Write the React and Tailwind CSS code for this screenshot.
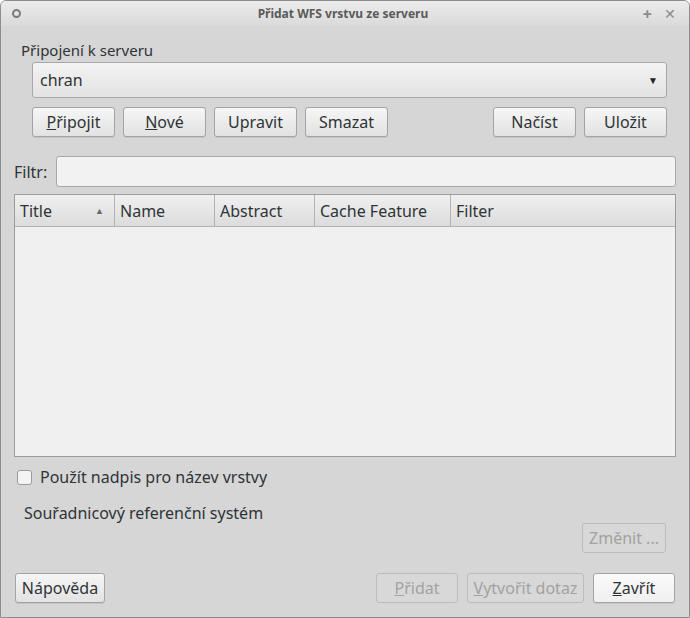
import React from "react";

const btn =
  "h-[30px] rounded-[3px] border border-[#a3a3a3] bg-gradient-to-b from-[#f6f6f6] to-[#e2e2e2] shadow-[0_1px_0_rgba(0,0,0,0.08)] text-[#2e3436] flex items-center justify-center";
const btnOff =
  "h-[30px] rounded-[3px] border border-[#bcbcbc] bg-[#d8d8d8] text-[#a2a2a2] flex items-center justify-center";

function Header({ label, w, sort, last }) {
  return (
    <div
      className={`h-full flex items-center px-[5px] ${last ? "flex-1" : "border-r border-[#b2b2b2]"} ${w}`}
    >
      <span className="flex-1">{label}</span>
      {sort && <span className="text-[9px] text-[#6a6a6a] mr-[5px]">▲</span>}
    </div>
  );
}

export default function App() {
  return (
    <div
      className="w-[690px] h-[618px] bg-[#d6d6d6] text-[16px] text-[#2e3436] flex flex-col border border-[#8e8e8e] rounded-t-[6px] overflow-hidden"
      style={{ fontFamily: '"Noto Sans", "Open Sans", sans-serif' }}
    >
      {/* title bar */}
      <div className="h-[25px] shrink-0 flex items-center px-[11px] bg-gradient-to-b from-[#ececec] to-[#dadada]">
        <div className="w-[9px] h-[9px] rounded-full border-2 border-[#7b7b7b]" />
        <div className="flex-1 text-center text-[12px] font-bold text-[#5a5a5a] pl-[22px]">
          Přidat WFS vrstvu ze serveru
        </div>
        <span className="text-[16px] text-[#8a8a8a] leading-none font-bold mr-[12px]">+</span>
        <span className="text-[14px] text-[#8a8a8a] leading-none mr-[2px]">✕</span>
      </div>

      <div className="flex-1 flex flex-col px-[13px]">
        <div className="pl-[7px] mt-[13px] leading-[22px] text-[15px]">Připojení k serveru</div>

        <div className="ml-[18px] mr-[9px] mt-[1px] h-[36px] rounded-[3px] border border-[#a8a8a8] bg-gradient-to-b from-[#f3f3f3] to-[#e3e3e3] flex items-center px-[7px]">
          <span className="flex-1">chran</span>
          <span className="text-[10px] text-[#222] mr-[1px]">▼</span>
        </div>

        <div className="ml-[18px] mr-[9px] mt-[9px] flex gap-[8px]">
          <div className={`${btn} w-[83px] border-[#9fb59a]`}>
            <span><u>P</u>řipojit</span>
          </div>
          <div className={`${btn} w-[83px]`}>
            <span><u>N</u>ové</span>
          </div>
          <div className={`${btn} w-[83px]`}>Upravit</div>
          <div className={`${btn} w-[83px]`}>Smazat</div>
          <div className="flex-1" />
          <div className={`${btn} w-[83px]`}>Načíst</div>
          <div className={`${btn} w-[83px]`}>Uložit</div>
        </div>

        <div className="mt-[19px] flex items-center">
          <span className="w-[42px]">Filtr:</span>
          <div className="flex-1 h-[31px] rounded-[3px] border border-[#a8a8a8] bg-[#f2f2f2]" />
        </div>

        <div className="mt-[7px] h-[263px] border border-[#9c9c9c] bg-[#f0f0f0] flex flex-col">
          <div className="h-[32px] flex border-b border-[#b2b2b2] bg-gradient-to-b from-[#f0f0f0] to-[#dcdcdc]">
            <Header label="Title" w="w-[100px]" sort />
            <Header label="Name" w="w-[100px]" />
            <Header label="Abstract" w="w-[100px]" />
            <Header label="Cache Feature" w="w-[136px]" />
            <Header label="Filter" last />
          </div>
        </div>

        <div className="mt-[8px] flex items-center pl-[3px]">
          <div className="w-[15px] h-[15px] rounded-[3px] border border-[#9a9a9a] bg-[#f4f4f4]" />
          <span className="ml-[8px]">Použít nadpis pro název vrstvy</span>
        </div>

        <div className="mt-[12px] pl-[10px]">Souřadnicový referenční systém</div>

        <div className="flex justify-end mr-[10px] mt-[-2px]">
          <div className={`${btnOff} w-[84px]`}>Změnit ...</div>
        </div>

        <div className="mt-[20px] mr-[1px] flex gap-[9px]">
          <div className={`${btn} w-[90px] ml-[1px]`}>Nápověda</div>
          <div className="flex-1" />
          <div className={`${btnOff} w-[82px]`}>
            <span><u>P</u>řidat</span>
          </div>
          <div className={`${btnOff} w-[117px]`}>
            <span><u>V</u>ytvořit dotaz</span>
          </div>
          <div className={`${btn} w-[82px] bg-gradient-to-b from-[#fafafa] to-[#f0f0f0]`}>
            <span><u>Z</u>avřít</span>
          </div>
        </div>
      </div>
    </div>
  );
}
